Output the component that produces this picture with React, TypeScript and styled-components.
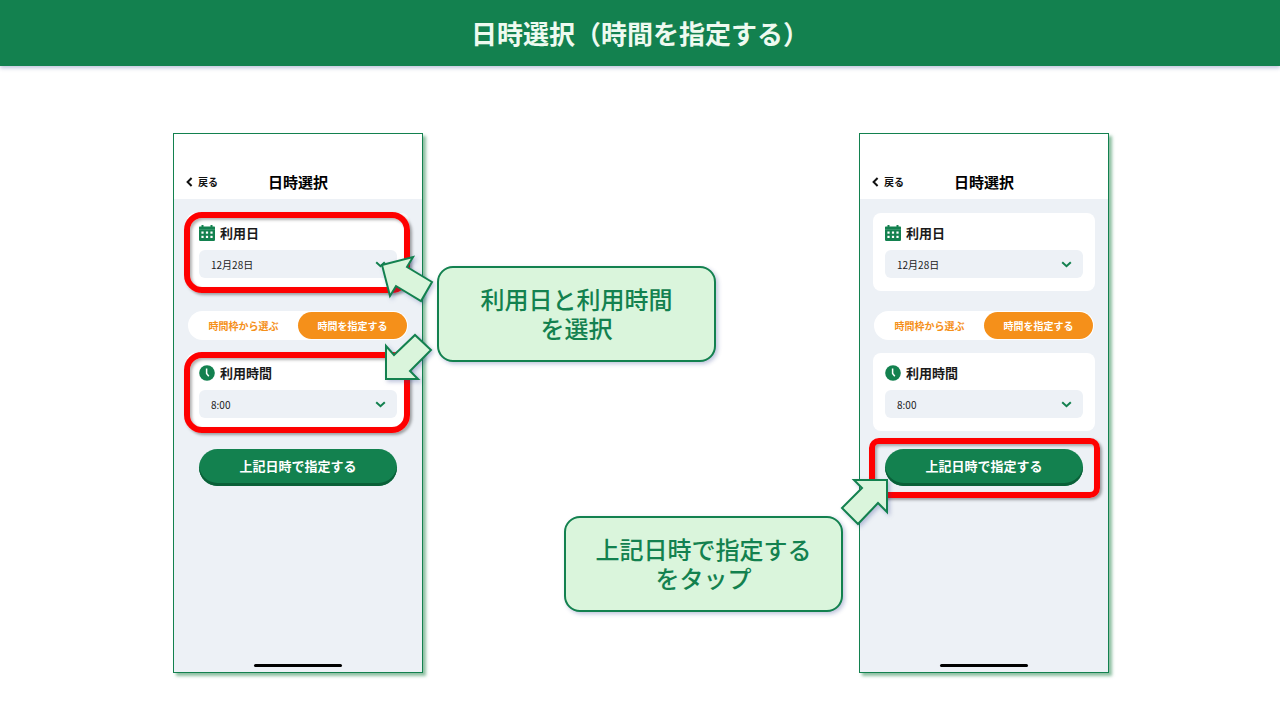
import React, { useId, useState } from "react";
import styled, { createGlobalStyle, css } from "styled-components";

const green = "#13814f";
const mint = "#daf5dc";
const softShadow = "rgba(40, 60, 140, 0.3)";

const GlobalStyle = createGlobalStyle`
  *, *::before, *::after { box-sizing: border-box; }
  body {
    margin: 0;
    background: #fff;
    color: #1a1a1a;
    font-family: "Noto Sans CJK JP", "Noto Sans", sans-serif;
  }
  button, select { font-family: inherit; }
`;

const Banner = styled.header`
  display: flex;
  align-items: center;
  justify-content: center;
  height: 66px;
  background: ${green};
  box-shadow: 0 2px 4px ${softShadow};
`;

const BannerTitle = styled.h1`
  margin: 0;
  color: #eefaf0;
  font-size: 26px;
  font-weight: 700;
  line-height: 38px;
`;

const Stage = styled.main`
  display: grid;
  grid-template-columns: 250px 1fr 250px;
  max-width: 938px;
  margin: 67px auto 46px;
  padding-left: 2px;
`;

const Phone = styled.section`
  display: flex;
  flex-direction: column;
  min-height: 540px;
  border: 1px solid ${green};
  background: #edf1f6;
  box-shadow: 3px 3px 3px rgba(30, 130, 70, 0.5);
`;

const NavBar = styled.div`
  display: grid;
  grid-template-columns: 1fr auto 1fr;
  align-items: center;
  padding: 36px 12px 5px;
  background: #fff;
`;

const BackButton = styled.button`
  display: flex;
  align-items: center;
  gap: 5px;
  padding: 0;
  border: 0;
  background: none;
  color: #111;
  font-size: 10px;
  font-weight: 700;
  line-height: 16px;
`;

const NavTitle = styled.h2`
  margin: 0;
  color: #000;
  font-size: 15px;
  font-weight: 700;
  line-height: 24px;
`;

const Content = styled.div`
  display: flex;
  flex: 1;
  flex-direction: column;
  padding: 14px 13px 0;
`;

const Card = styled.div`
  position: relative;
  display: flex;
  flex-direction: column;
  gap: 8px;
  padding: 11px 12px 13px;
  border-radius: 8px;
  background: #fff;
`;

const CardLabel = styled.label`
  display: flex;
  align-items: center;
  gap: 5px;
  font-size: 13px;
  font-weight: 700;
  line-height: 18px;
`;

const SelectBox = styled.div`
  display: grid;
  align-items: center;

  > * { grid-area: 1 / 1; }

  > svg {
    justify-self: end;
    margin-right: 11px;
    pointer-events: none;
  }
`;

const Select = styled.select`
  appearance: none;
  width: 100%;
  height: 28px;
  padding: 0 12px;
  border: 0;
  border-radius: 6px;
  background: #edf1f6;
  color: #222;
  font-size: 10px;
`;

const Switcher = styled.div`
  display: grid;
  grid-template-columns: 1fr 1fr;
  margin: 20px 1px 13px;
  padding: 1px;
  border-radius: 15px;
  background: #fff;
`;

const SwitchOption = styled.button<{ $active: boolean }>`
  height: 27px;
  padding: 0;
  border: 0;
  border-radius: 14px;
  background: ${(p) => (p.$active ? "#f5901a" : "transparent")};
  color: ${(p) => (p.$active ? "#fff" : "#f5901a")};
  font-size: 10px;
  font-weight: 700;
`;

const SubmitArea = styled.div`
  position: relative;
  margin: 18px 12px 0;
`;

const SubmitButton = styled.button`
  display: block;
  width: 100%;
  height: 37px;
  padding: 0 0 4px;
  border: 0;
  border-radius: 19px;
  background: ${green};
  box-shadow: inset 0 -3px 0 #0a6038;
  color: #fff;
  font-size: 13px;
  font-weight: 700;
`;

const HomeIndicator = styled.div`
  width: 88px;
  height: 3px;
  margin: auto auto 5px;
  border-radius: 2px;
  background: #000;
`;

const Highlight = styled.div<{ $target: "card" | "button" }>`
  position: absolute;
  border: 6px solid #fe0000;
  box-shadow: 2px 2px 3px rgba(0, 0, 0, 0.35), inset 2px 2px 3px rgba(0, 0, 0, 0.3);
  pointer-events: none;
  ${(p) =>
    p.$target === "card"
      ? css`
          inset: -1px -1px -2px -3px;
          border-radius: 18px;
        `
      : css`
          inset: -11px -17px -12px -16px;
          border-radius: 10px;
        `}
`;

const ArrowSvg = styled.svg<{ $place: "date" | "time" | "submit" }>`
  position: absolute;
  z-index: 1;
  overflow: visible;
  fill: ${mint};
  stroke: ${green};
  stroke-width: 2;
  filter: drop-shadow(2px 2px 2px ${softShadow});
  pointer-events: none;
  ${(p) => p.$place === "date" && css`top: 42px; right: -25px;`}
  ${(p) => p.$place === "time" && css`top: -20px; right: -29px;`}
  ${(p) => p.$place === "submit" && css`top: 28px; left: -45px;`}
`;

const Notes = styled.div`
  display: flex;
  flex-direction: column;
  gap: 154px;
  padding: 133px 16px 0 14px;
`;

const Callout = styled.p<{ $side: "left" | "right" }>`
  align-self: ${(p) => (p.$side === "left" ? "flex-start" : "flex-end")};
  width: 279px;
  max-width: 100%;
  margin: 0;
  padding: 16px 12px 18px;
  border: 2px solid ${green};
  border-radius: 16px;
  background: ${mint};
  box-shadow: 2px 2px 4px ${softShadow};
  color: ${green};
  font-size: 24px;
  font-weight: 500;
  line-height: 29px;
  text-align: center;
`;

const arrowPoints = {
  date: "2,10 33,2 27,12 52,27 41,46 16,31 10,41",
  time: "2,46 2,13 10,22 31,2 47,17 26,38 34,46",
  submit: "14,3 47,3 47,35 38,26 18,47 2,31 22,11",
};

function Arrow({ place }: { place: "date" | "time" | "submit" }) {
  return (
    <ArrowSvg $place={place} width="54" height="48" viewBox="0 0 54 48" aria-hidden="true">
      <polygon points={arrowPoints[place]} />
    </ArrowSvg>
  );
}

function BackIcon() {
  return (
    <svg width="7" height="10" viewBox="0 0 7 10" fill="none" stroke="#111" strokeWidth="2" aria-hidden="true">
      <path d="M5.6 1 1.6 5l4 4" />
    </svg>
  );
}

function ChevronIcon() {
  return (
    <svg width="11" height="7" viewBox="0 0 11 7" fill="none" stroke={green} strokeWidth="2" aria-hidden="true">
      <path d="M1.2 1.2 5.5 5.2 9.8 1.2" />
    </svg>
  );
}

function CalendarIcon() {
  return (
    <svg width="16" height="16" viewBox="0 0 16 16" aria-hidden="true">
      <path
        fill={green}
        d="M2.5 0h2v1.4h7V0h2v1.4h1.5c.6 0 1 .4 1 1V15c0 .5-.4.9-1 .9H1c-.6 0-1-.4-1-.9V2.4c0-.6.4-1 1-1h1.5z"
      />
      <path fill="#3d9870" d="M0 4.2h16v.8H0z" />
      <g fill="#fff">
        <rect x="2.4" y="6.5" width="2.2" height="2.2" />
        <rect x="6.9" y="6.5" width="2.2" height="2.2" />
        <rect x="11.4" y="6.5" width="2.2" height="2.2" />
        <rect x="2.4" y="10.8" width="2.2" height="2.2" />
        <rect x="6.9" y="10.8" width="2.2" height="2.2" />
        <rect x="11.4" y="10.8" width="2.2" height="2.2" />
      </g>
    </svg>
  );
}

function ClockIcon() {
  return (
    <svg width="16" height="16" viewBox="0 0 16 16" aria-hidden="true">
      <circle cx="8" cy="8" r="7.8" fill={green} />
      <path d="M7.6 3.6v4.8l2.2 2.8" fill="none" stroke="#fff" strokeWidth="1.5" />
    </svg>
  );
}

type FieldProps = {
  icon: React.ReactNode;
  label: string;
  options: string[];
  children?: React.ReactNode;
};

function FieldCard({ icon, label, options, children }: FieldProps) {
  const id = useId();
  return (
    <Card>
      <CardLabel htmlFor={id}>
        {icon}
        {label}
      </CardLabel>
      <SelectBox>
        <Select id={id}>
          {options.map((o) => (
            <option key={o}>{o}</option>
          ))}
        </Select>
        <ChevronIcon />
      </SelectBox>
      {children}
    </Card>
  );
}

function PhoneScreen({ step }: { step: "select" | "submit" }) {
  const [mode, setMode] = useState<"slot" | "time">("time");
  const selecting = step === "select";
  return (
    <Phone>
      <NavBar>
        <BackButton type="button">
          <BackIcon />
          戻る
        </BackButton>
        <NavTitle>日時選択</NavTitle>
      </NavBar>
      <Content>
        <FieldCard icon={<CalendarIcon />} label="利用日" options={["12月28日"]}>
          {selecting && <Highlight $target="card" />}
          {selecting && <Arrow place="date" />}
        </FieldCard>
        <Switcher>
          <SwitchOption type="button" $active={mode === "slot"} aria-pressed={mode === "slot"} onClick={() => setMode("slot")}>
            時間枠から選ぶ
          </SwitchOption>
          <SwitchOption type="button" $active={mode === "time"} aria-pressed={mode === "time"} onClick={() => setMode("time")}>
            時間を指定する
          </SwitchOption>
        </Switcher>
        <FieldCard icon={<ClockIcon />} label="利用時間" options={["8:00"]}>
          {selecting && <Highlight $target="card" />}
          {selecting && <Arrow place="time" />}
        </FieldCard>
        <SubmitArea>
          <SubmitButton type="button">上記日時で指定する</SubmitButton>
          {!selecting && <Highlight $target="button" />}
          {!selecting && <Arrow place="submit" />}
        </SubmitArea>
        <HomeIndicator />
      </Content>
    </Phone>
  );
}

export default function App() {
  return (
    <>
      <GlobalStyle />
      <Banner>
        <BannerTitle>日時選択（時間を指定する）</BannerTitle>
      </Banner>
      <Stage>
        <PhoneScreen step="select" />
        <Notes>
          <Callout $side="left">
            利用日と利用時間
            <br />
            を選択
          </Callout>
          <Callout $side="right">
            上記日時で指定する
            <br />
            をタップ
          </Callout>
        </Notes>
        <PhoneScreen step="submit" />
      </Stage>
    </>
  );
}
